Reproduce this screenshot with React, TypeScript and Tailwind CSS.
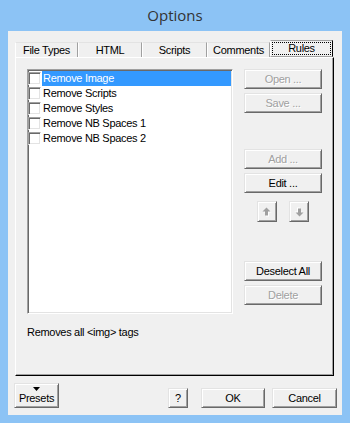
const raised =
  "border border-t-[#e3e3e3] border-l-[#e3e3e3] border-r-[#696969] border-b-[#696969] shadow-[inset_1px_1px_0_#fff,inset_-1px_-1px_0_#a0a0a0] bg-[#f0f0f0]";
const sunken =
  "border border-t-[#a0a0a0] border-l-[#a0a0a0] border-r-white border-b-white shadow-[inset_1px_1px_0_#696969,inset_-1px_-1px_0_#e3e3e3]";

function Btn({ label, w, disabled, className = "" }: { label: string; w: string; disabled?: boolean; className?: string }) {
  return (
    <div className={`${raised} ${w} h-[20px] flex items-center justify-center ${className}`}>
      <span
        className={
          disabled
            ? "text-[#a0a0a0] [text-shadow:1px_1px_0_#fff]"
            : "text-black"
        }
      >
        {label}
      </span>
    </div>
  );
}

function Arrow({ down }: { down?: boolean }) {
  return (
    <div className={`${raised} w-[20px] h-[21px] flex items-center justify-center`}>
      <svg width="10" height="10" viewBox="0 0 10 10" className={down ? "rotate-180" : ""}>
        <path d="M4.5 0.5 L8.5 4.5 L6 4.5 L6 8.5 L3 8.5 L3 4.5 L0.5 4.5 Z" fill="#fff" transform="translate(1 1)" />
        <path d="M4.5 0.5 L8.5 4.5 L6 4.5 L6 8.5 L3 8.5 L3 4.5 L0.5 4.5 Z" fill="#a0a0a0" />
      </svg>
    </div>
  );
}

const tabs = [
  { label: "File Types", w: "w-[63px]" },
  { label: "HTML", w: "w-[64px]" },
  { label: "Scripts", w: "w-[65px]" },
  { label: "Comments", w: "w-[63px]" },
];

const rules = ["Remove Image", "Remove Scripts", "Remove Styles", "Remove NB Spaces 1", "Remove NB Spaces 2"];

export default function App() {
  return (
    <div className="w-[350px] h-[423px] bg-[#8cc3f5] flex flex-col font-['Liberation_Sans',Arial,sans-serif] text-[11px] tracking-[-0.3px] text-black">
      {/* Title bar */}
      <div className="h-[31px] flex items-center justify-center font-['Open_Sans',sans-serif] text-[15px] tracking-normal text-[#333]">
        Options
      </div>

      {/* Client area */}
      <div className="mx-[8px] mb-[8px] flex-1 bg-[#f0f0f0] flex flex-col pt-[9px]">
        {/* Tab strip */}
        <div className="ml-[7px] flex items-end h-[17px]">
          {tabs.map((t) => (
            <div
              key={t.label}
              className={`${t.w} h-[15px] border-t border-l border-r border-t-[#e3e3e3] border-l-white border-r-[#a0a0a0] flex items-center justify-center leading-[13px] pt-[1px]`}
            >
              {t.label}
            </div>
          ))}
          <div className="w-[63px] h-[17px] border border-t-[#a0a0a0] border-l-white border-r-[#000] border-b-[#a0a0a0] flex items-center justify-center p-[1px]">
            <div className="w-full h-full border border-dotted border-black flex items-center justify-center leading-[13px]">
              Rules
            </div>
          </div>
        </div>

        {/* Panel */}
        <div className="ml-[7px] w-[319px] h-[319px] border border-t-white border-l-white border-r-black border-b-black shadow-[inset_-1px_-1px_0_#a0a0a0] pt-[11px] pl-[11px] flex flex-col">
          <div className="flex">
            {/* List box */}
            <div className={`${sunken} w-[206px] h-[245px] bg-white py-[1px] pr-[1px] flex flex-col`}>
              {rules.map((r, i) => (
                <div key={r} className="h-[15px] flex items-center">
                  <div className={`${sunken} w-[13px] h-[13px] bg-white shrink-0`} />
                  <div
                    className={`ml-[1px] flex-1 h-[15px] flex items-center pl-[1px] ${
                      i === 0 ? "bg-[#3399ff] text-white" : ""
                    }`}
                  >
                    {r}
                  </div>
                </div>
              ))}
            </div>

            {/* Buttons column */}
            <div className="ml-[11px] flex flex-col items-center">
              <Btn label="Open ..." w="w-[78px]" disabled />
              <Btn label="Save ..." w="w-[78px]" disabled className="mt-[4px]" />
              <Btn label="Add ..." w="w-[78px]" disabled className="mt-[36px]" />
              <Btn label="Edit ..." w="w-[78px]" className="mt-[4px]" />
              <div className="mt-[8px] flex gap-[12px]">
                <Arrow />
                <Arrow down />
              </div>
              <Btn label="Deselect All" w="w-[78px]" className="mt-[39px]" />
              <Btn label="Delete" w="w-[78px]" disabled className="mt-[4px]" />
            </div>
          </div>

          <div className="mt-[12px] leading-[13px]">Removes all &lt;img&gt; tags</div>
        </div>

        {/* Bottom buttons */}
        <div className="mt-[7px] pl-[6px] flex items-end h-[25px]">
          <div className={`${raised} w-[45px] h-[25px] flex flex-col items-center pt-[3px]`}>
            <svg width="7" height="4" viewBox="0 0 7 4">
              <path d="M0 0 L7 0 L3.5 4 Z" fill="#000" />
            </svg>
            <span className="leading-[13px] mt-[1px]">Presets</span>
          </div>
          <Btn label="?" w="w-[20px]" className="ml-[109px]" />
          <Btn label="OK" w="w-[64px]" className="ml-[13px]" />
          <Btn label="Cancel" w="w-[65px]" className="ml-[7px]" />
        </div>
      </div>
    </div>
  );
}
